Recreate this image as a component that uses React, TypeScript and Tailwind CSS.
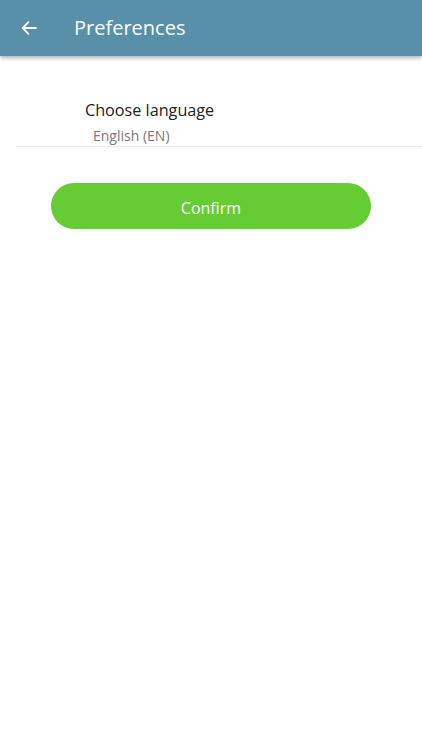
export default function App() {
  return (
    <div className="min-h-[750px] w-full bg-white" style={{ fontFamily: '"Open Sans", sans-serif' }}>
      <header className="flex h-[56px] items-center bg-[#5790a8] shadow-[0_2px_4px_rgba(0,0,0,0.3)]">
        <svg className="ml-[20px] h-[18px] w-[18px]" viewBox="0 0 24 24" fill="none" stroke="white" strokeWidth="2.4" strokeLinecap="square">
          <path d="M21 12H4M11 4.5L3.5 12l7.5 7.5" />
        </svg>
        <h1 className="ml-[36px] text-[20px] leading-none text-white">Preferences</h1>
      </header>

      <div className="ml-[16px] mt-[43px] border-b border-[#eeeeee]">
        <p className="ml-[69px] text-[16.2px] leading-[22px] text-[#222222]">Choose language</p>
        <p className="ml-[77px] mt-[5px] text-[14px] leading-[20px] text-[#7a7a7a]">English (EN)</p>
      </div>

      <div className="mt-[36px] flex justify-center">
        <button className="h-[46px] w-[320px] rounded-full bg-[#66cc33] pt-[4px] text-[16px] text-white">Confirm</button>
      </div>
    </div>
  )
}
